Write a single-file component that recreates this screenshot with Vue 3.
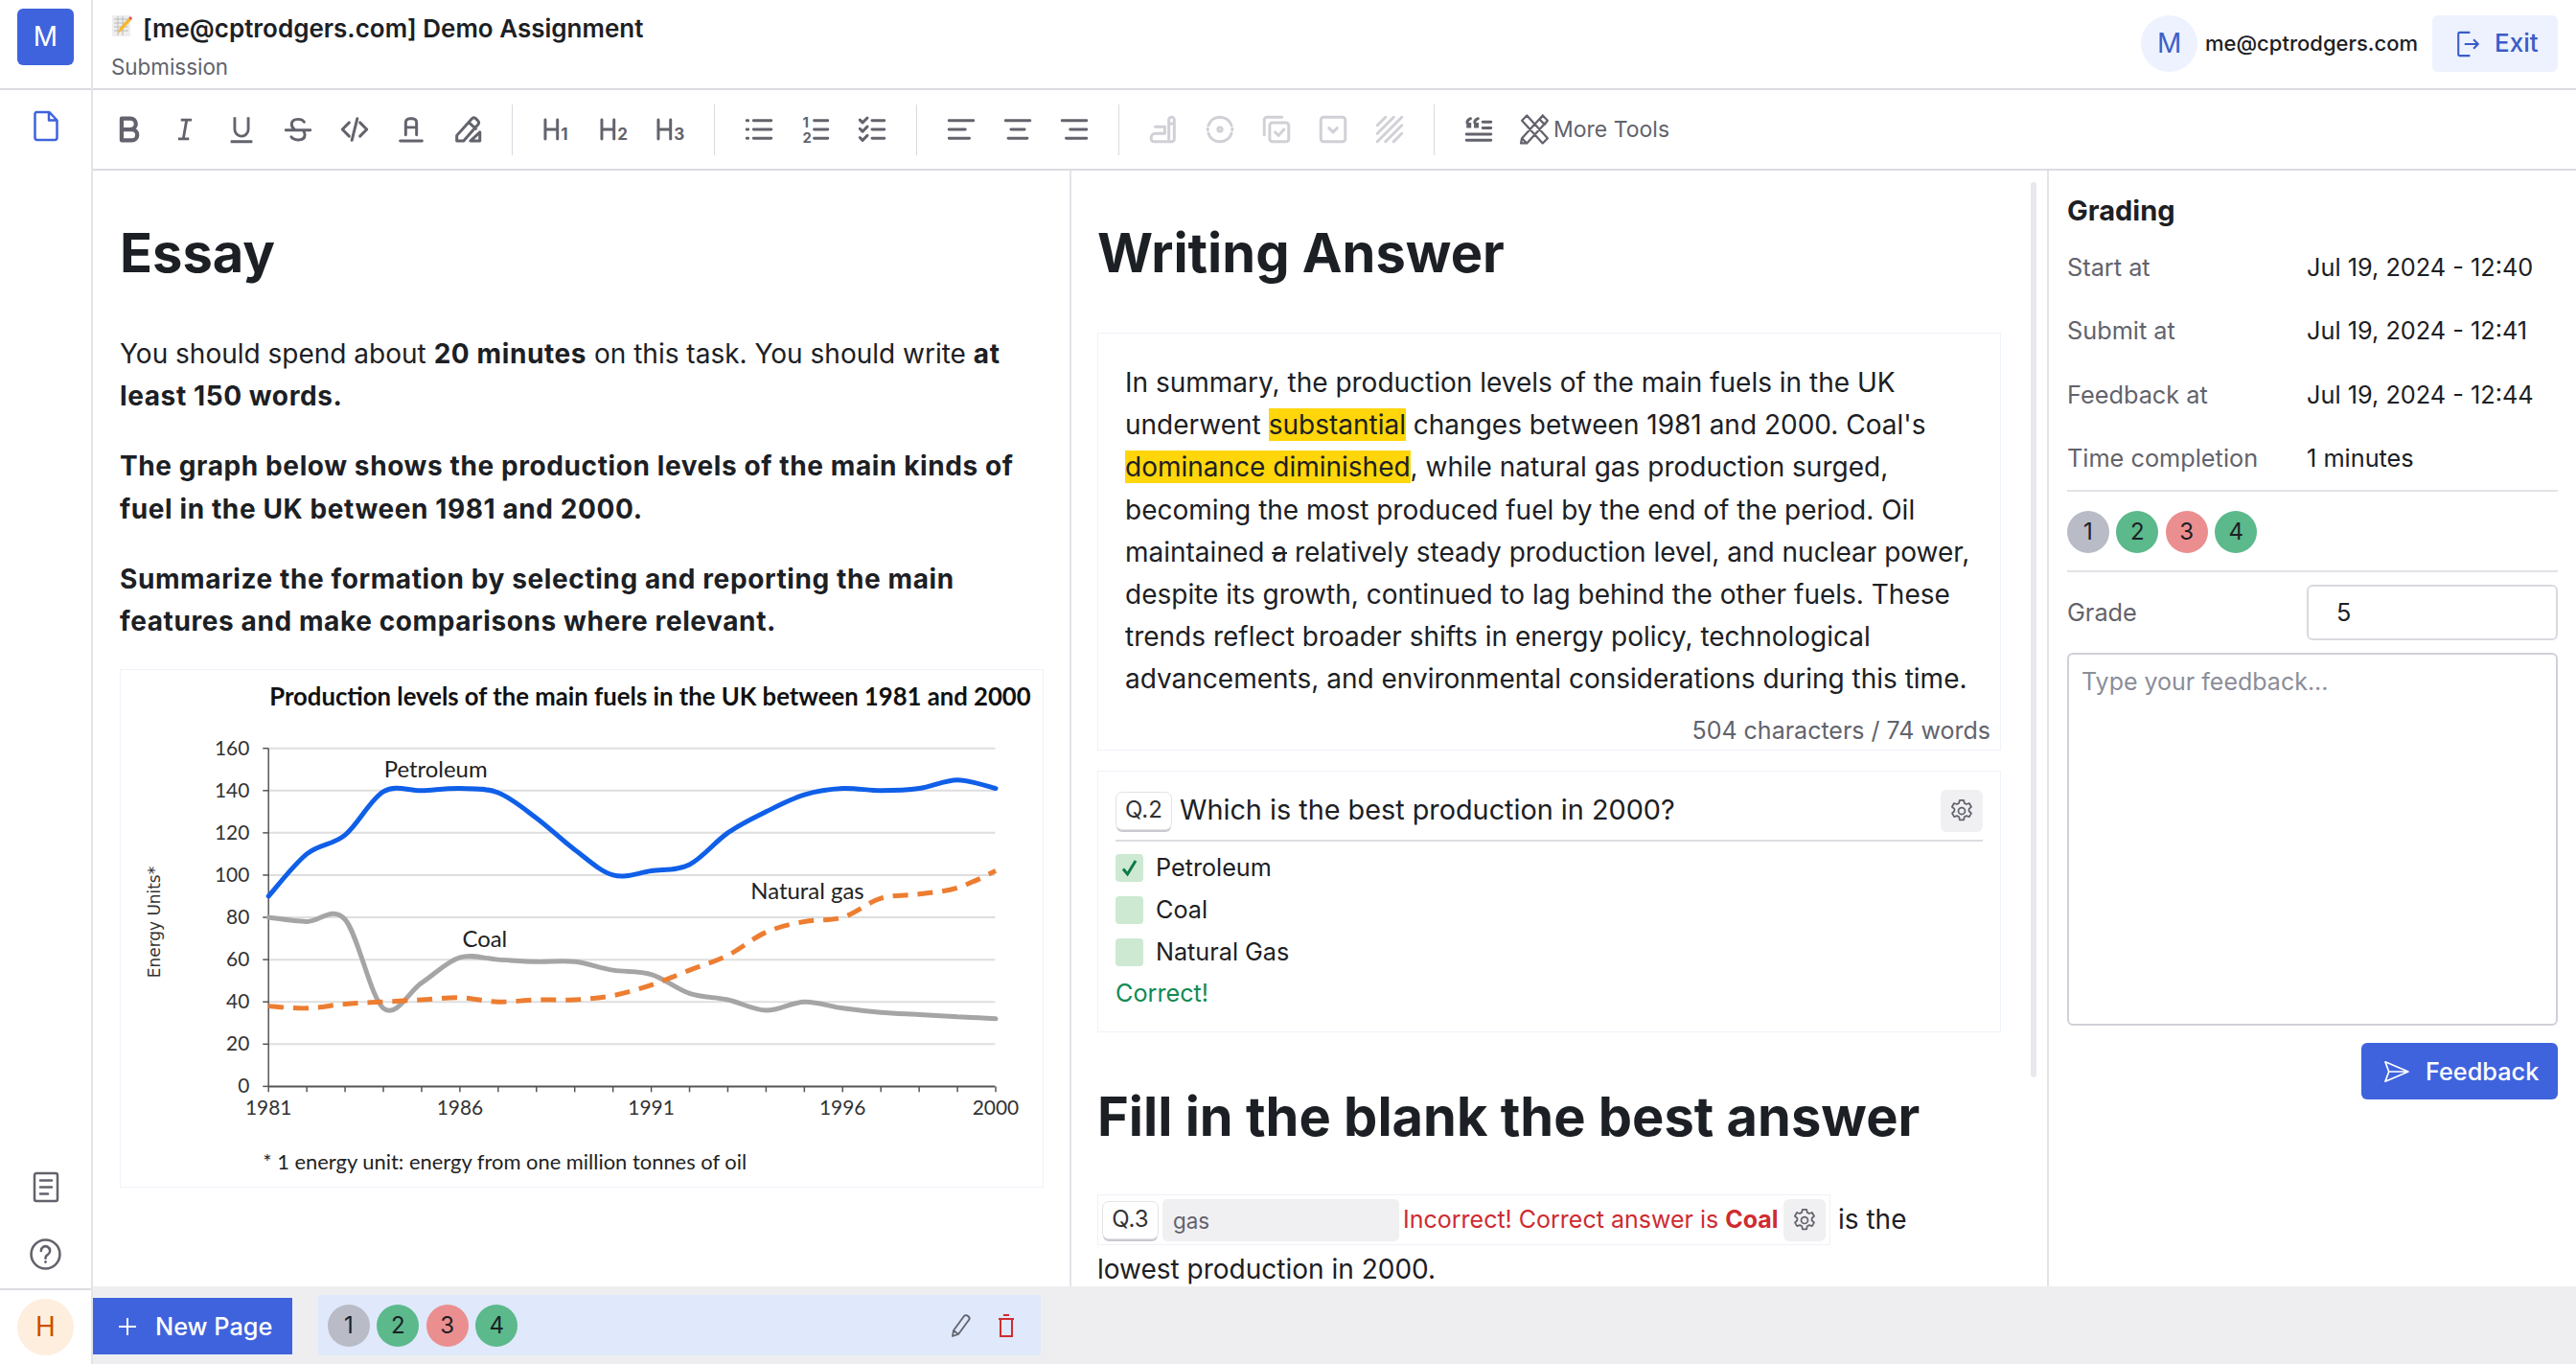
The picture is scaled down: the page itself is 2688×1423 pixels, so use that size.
<script setup>
const groups = [
  [
    { s: 'M7 4h6.500a4 4 0 0 1 0 8H7zM7 12h7.500a4 4 0 0 1 0 8H7z', w: 3 },
    { f: 'M15 20H7v-2h2.927l2.116-12H9V4h8v2h-2.927l-2.116 12H15z' },
    { f: 'M8 3v9a4 4 0 1 0 8 0V3h2v9a6 6 0 1 1-12 0V3h2zM4 20h16v2H4v-2z' },
    { s: 'M3 12.500h18M16.500 6.500C15.500 5 14 4.500 12 4.500c-2.800 0-4.700 1.400-4.700 3.800 0 1.700.9 3 2.500 4.200M7 17.500c1 1.500 2.700 2.200 5 2.200 3 0 5-1.400 5-3.900 0-1.200-.4-2.300-1.300-3.300' },
    { s: 'M8 7l-5 5 5 5M16 7l5 5-5 5M14 4l-4 16' },
    { s: 'M8 16V7a3 3 0 0 1 3-3h2a3 3 0 0 1 3 3v9M8 10.500h8M4 20.500h16' },
    { s: 'M4 20.500v-4L15 4.200c.8-.9 2-1 2.900-.2l1.600 1.500c.9.8 1 2 .1 2.900L9 20.500H4zM13 7l5 4.500M14 20.500l7-6.500v6.500h-7z' }
  ],
  [
    { s: 'M3.500 5v14M12.500 5v14M3.500 12h9', t: '1' },
    { s: 'M3.500 5v14M12.500 5v14M3.500 12h9', t: '2' },
    { s: 'M3.500 5v14M12.500 5v14M3.500 12h9', t: '3' }
  ],
  [
    { s: 'M8 5.500h13M8 12h13M8 18.500h13M3 5.500h1M3 12h1M3 18.500h1' },
    { s: 'M11 5.500h10M11 12h10M11 18.500h10', n: true },
    { s: 'M12 5.500h9M12 12h9M12 18.500h9M3 5l2 2 3.500-3.500M3 11.500l2 2 3.500-3.500M3 18l2 2 3.500-3.500' }
  ],
  [
    { s: 'M3 5.500h18M3 12h12M3 18.500h15' },
    { s: 'M3 5.500h18M7 12h10M5 18.500h14' },
    { s: 'M3 5.500h18M9 12h12M6 18.500h15' }
  ],
  [
    { off: true, s: 'M6 10h7v5H6a3 3 0 0 0-3 3v1a2 2 0 0 0 2 2h13a2 2 0 0 0 2-2V5a2 2 0 0 0-4 0v14M18 7.500v.5' },
    { off: true, s: 'M3.500 9a9 9 0 0 1 17 0M3.500 15a9 9 0 0 0 17 0M3 11.500v1M21 11.500v1M12 10.500a1.500 1.500 0 1 1 0 3 1.500 1.500 0 0 1 0-3z' },
    { off: true, s: 'M16 3H5a2 2 0 0 0-2 2v11M9 7h10a2 2 0 0 1 2 2v10a2 2 0 0 1-2 2H9a2 2 0 0 1-2-2V9a2 2 0 0 1 2-2zM11 14l2.500 2.500 4-4.500' },
    { off: true, s: 'M5 3h14a2 2 0 0 1 2 2v14a2 2 0 0 1-2 2H5a2 2 0 0 1-2-2V5a2 2 0 0 1 2-2zM9 11l3 3 3-3' },
    { off: true, s: 'M3 9l6-6M3 15L15 3M3 21L21 3M9 21L21 9M15 21l6-6' }
  ]
]

const dateRows = [
  ['Start at', 'Jul 19, 2024 - 12:40'],
  ['Submit at', 'Jul 19, 2024 - 12:41'],
  ['Feedback at', 'Jul 19, 2024 - 12:44'],
  ['Time completion', '1 minutes']
]
const dots = [
  { n: 1, c: 'd-grey' },
  { n: 2, c: 'd-green' },
  { n: 3, c: 'd-red' },
  { n: 4, c: 'd-green' }
]

/* chart */
const X0 = 279
const XSTEP = 40.085
const Y0 = 1135
const YU = 2.2125
const xOf = (i) => X0 + i * XSTEP
const yOf = (v) => Y0 - v * YU
function smooth(vals) {
  const p = vals.map((v, i) => [xOf(i), yOf(v)])
  let d = `M${p[0][0]} ${p[0][1]}`
  for (let i = 0; i < p.length - 1; i++) {
    const a = p[Math.max(i - 1, 0)]
    const b = p[i]
    const c = p[i + 1]
    const e = p[Math.min(i + 2, p.length - 1)]
    d += ` C${b[0] + (c[0] - a[0]) / 6} ${b[1] + (c[1] - a[1]) / 6} ${c[0] - (e[0] - b[0]) / 6} ${c[1] - (e[1] - b[1]) / 6} ${c[0]} ${c[1]}`
  }
  return d
}
const petroleum = smooth([90, 110, 119, 139.5, 140, 141, 139, 127, 112, 100, 102, 105, 120, 130, 138, 141, 140, 141, 145, 141])
const coal = smooth([80, 78, 79, 37, 49, 61, 60, 59, 59, 55, 53, 44, 41, 36, 40, 37, 35, 34, 33, 32])
const gas = smooth([38, 37, 39, 40, 41, 42, 40, 41, 41, 43, 48, 55, 62, 73, 78, 80, 89, 91, 94, 102])
const yTicks = [0, 20, 40, 60, 80, 100, 120, 140, 160]
const xTicks = Array.from({ length: 20 }, (_, i) => i)
const yearLabels = [
  [0, '1981'],
  [5, '1986'],
  [10, '1991'],
  [15, '1996'],
  [19, '2000']
]
</script>

<template>
  <div class="app">
    <aside class="side">
      <div class="side-top"><div class="logo">M</div></div>
      <div class="side-main">
        <svg class="side-icon blue" viewBox="0 0 28 32"><path d="M3.500 1.500h14l8 8.500v18a2.500 2.500 0 0 1-2.500 2.500H5A2.500 2.500 0 0 1 2.500 28V3zM17 2v8h8.500" /></svg>
        <div class="side-bottom">
          <svg class="side-icon grey" viewBox="0 0 28 32"><path d="M4 1.500h20a2 2 0 0 1 2 2v25a2 2 0 0 1-2 2H4a2 2 0 0 1-2-2v-25a2 2 0 0 1 2-2zM8 9h12M8 16h12M8 23h8" /></svg>
          <svg class="side-icon grey help" viewBox="0 0 32 32"><circle cx="16" cy="16" r="14.500" /><path d="M11.500 12.500a4.500 4.500 0 1 1 7 3.700c-1.600 1-2.500 2-2.500 3.800M16 23.500v.5" /></svg>
        </div>
      </div>
      <div class="side-foot"><div class="avatar-h">H</div></div>
    </aside>

    <div class="main">
      <header class="head">
        <div class="head-left">
          <div class="title"><span class="emoji"><svg viewBox="0 0 22 24"><rect x="1" y="1" width="19" height="22" fill="#eee" /><path d="M3 5h15M3 9h15M3 13h15M3 17h15M7 2v20M12 2v20" stroke="#bbb" stroke-width="1" /><path d="M7 20l2-6L18 4l3 2-10 11z" fill="#f5b82e" /><path d="M18 4l3 2 1-2-2-2z" fill="#e0574f" /></svg></span>[me@cptrodgers.com] Demo Assignment</div>
          <div class="sub">Submission</div>
        </div>
        <div class="head-right">
          <div class="avatar-m">M</div>
          <div class="email">me@cptrodgers.com</div>
          <div class="exit">
            <svg viewBox="0 0 26 30"><path d="M15 2H3.500A1.500 1.500 0 0 0 2 3.500v23A1.500 1.500 0 0 0 3.500 28H15M9 15h15M19 10l5 5-5 5" /></svg>
            <span>Exit</span>
          </div>
        </div>
      </header>

      <nav class="tools">
        <template v-for="(g, gi) in groups" :key="gi">
          <span v-if="gi" class="sep"></span>
          <button v-for="(ic, i) in g" :key="i" class="tool" :class="{ off: ic.off }">
            <svg viewBox="0 0 24 24">
              <path v-if="ic.f" :d="ic.f" class="fill" />
              <path v-if="ic.s" :d="ic.s" class="line" :class="{ heavy: ic.w }" />
              <text v-if="ic.t" x="15" y="20" class="digit">{{ ic.t }}</text>
              <template v-if="ic.n">
                <text x="2.500" y="10.500" class="digit small">1</text>
                <text x="2.500" y="22" class="digit small">2</text>
              </template>
            </svg>
          </button>
        </template>
        <span class="sep"></span>
        <button class="tool">
          <svg viewBox="0 0 24 24"><path class="fill" d="M3 7h3.500v4H3zM8.500 7H12v4H8.500z" /><path class="line" d="M3.500 7c0-1.500 1-2.500 2.500-3M9 7c0-1.500 1-2.500 2.500-3M15 6.500h6M15 11h6M3 15.500h18M3 20h18" /></svg>
        </button>
        <button class="more">
          <svg viewBox="0 0 32 32"><path d="M8 2l-5 5 21 23 5-5zM24 2l5 5L8 30l-5-5zM3 25l-1 5 6 0M24 2l-3 4 5 5 3-4z" /></svg>
          <span>More Tools</span>
        </button>
      </nav>

      <div class="body">
        <section class="col col-left">
          <h1>Essay</h1>
          <p>You should spend about <b>20 minutes</b> on this task. You should write <b>at least 150 words.</b></p>
          <p><b>The graph below shows the production levels of the main kinds of fuel in the UK between 1981 and 2000.</b></p>
          <p><b>Summarize the formation by selecting and reporting the main features and make comparisons where relevant.</b></p>
          <svg class="chart" viewBox="125 699 964 541">
            <text x="280" y="736" class="c-title">Production levels of the main fuels in the UK between 1981 and 2000</text>
            <line v-for="t in yTicks.slice(1)" :key="t" x1="279" x2="1040" :y1="yOf(t)" :y2="yOf(t)" class="grid" />
            <line x1="279" x2="279" y1="781" y2="1135" class="axis" />
            <line x1="279" x2="1040" y1="1135" y2="1135" class="axis thick" />
            <line v-for="t in yTicks" :key="'y' + t" x1="273" x2="279" :y1="yOf(t)" :y2="yOf(t)" class="axis" />
            <line v-for="i in xTicks" :key="'x' + i" :x1="xOf(i)" :x2="xOf(i)" y1="1135" y2="1141" class="axis" />
            <text v-for="t in yTicks" :key="'l' + t" x="259" :y="yOf(t) + 7" class="c-num" text-anchor="end">{{ t }}</text>
            <text v-for="l in yearLabels" :key="l[1]" :x="xOf(l[0])" y="1165" class="c-num" text-anchor="middle">{{ l[1] }}</text>
            <path :d="coal" class="c-coal" />
            <path :d="gas" class="c-gas" />
            <path :d="petroleum" class="c-pet" />
            <text x="400" y="811" class="c-lab">Petroleum</text>
            <text x="784" y="939" class="c-lab">Natural gas</text>
            <text x="482" y="989" class="c-lab">Coal</text>
            <text x="273" y="1222" class="c-note">* 1 energy  unit: energy from one million tonnes of oil</text>
            <text transform="translate(165 963) rotate(-90)" class="c-units" text-anchor="middle">Energy Units*</text>
          </svg>
        </section>

        <section class="col col-mid">
          <h1>Writing Answer</h1>
          <div class="answer">
            <div class="answer-text">In summary, the production levels of the main fuels in the UK underwent <mark>substantial</mark> changes between 1981 and 2000. Coal's <mark>dominance diminished</mark>, while natural gas production surged, becoming the most produced fuel by the end of the period. Oil maintained <s>a</s> relatively steady production level, and nuclear power, despite its growth, continued to lag behind the other fuels. These trends reflect broader shifts in energy policy, technological advancements, and environmental considerations during this time.</div>
            <div class="count">504 characters / 74 words</div>
          </div>
          <div class="quiz">
            <div class="q-head">
              <span class="badge">Q.2</span>
              <span class="q-text">Which is the best production in 2000?</span>
              <span class="gear-btn"><svg viewBox="0 0 24 24"><path d="M10.300 3h3.400l.5 2.500 1.700.9 2.400-.8 1.700 3-1.900 1.700v1.900l1.900 1.700-1.700 3-2.400-.8-1.700.9-.5 2.500h-3.400l-.5-2.500-1.700-.9-2.400.8-1.700-3 1.900-1.700v-1.900L3.900 8.600l1.700-3 2.400.8 1.700-.9z" /><circle cx="12" cy="12" r="2.800" /></svg></span>
            </div>
            <label class="opt"><span class="cb"><svg viewBox="0 0 29 29"><path d="M8 15.500l4.500 5.500L21 7" /></svg></span>Petroleum</label>
            <label class="opt"><span class="cb"></span>Coal</label>
            <label class="opt"><span class="cb"></span>Natural Gas</label>
            <div class="correct">Correct!</div>
          </div>
          <h1 class="h-fill">Fill in the blank the best answer</h1>
          <div class="blank">
            <span class="blank-box">
              <span class="badge">Q.3</span>
              <span class="blank-input">gas</span>
              <span class="wrong">Incorrect! Correct answer is <b>Coal</b></span>
              <span class="gear-btn"><svg viewBox="0 0 24 24"><path d="M10.300 3h3.400l.5 2.500 1.700.9 2.400-.8 1.700 3-1.900 1.700v1.900l1.900 1.700-1.700 3-2.400-.8-1.700.9-.5 2.500h-3.400l-.5-2.500-1.700-.9-2.400.8-1.700-3 1.900-1.700v-1.900L3.900 8.600l1.700-3 2.400.8 1.700-.9z" /><circle cx="12" cy="12" r="2.800" /></svg></span>
            </span>
            <span class="after">is the</span>
          </div>
          <p class="last">lowest production in 2000.</p>
          <div class="scrollbar"></div>
        </section>

        <aside class="col-right">
          <h2>Grading</h2>
          <div v-for="r in dateRows" :key="r[0]" class="info"><span class="k">{{ r[0] }}</span><span>{{ r[1] }}</span></div>
          <div class="dots-row">
            <span v-for="d in dots" :key="d.n" class="dot" :class="d.c">{{ d.n }}</span>
          </div>
          <div class="grade"><span class="k">Grade</span><div class="grade-input">5</div></div>
          <div class="feedback-box">Type your feedback...</div>
          <div class="fb-row">
            <button class="fb-btn">
              <svg viewBox="0 0 30 26"><path d="M2 2l26 11L2 24l4-11zM6 13h22" /></svg>
              <span>Feedback</span>
            </button>
          </div>
        </aside>
      </div>

      <footer class="foot">
        <button class="new-page">
          <svg viewBox="0 0 20 20"><path d="M10 1v18M1 10h18" /></svg>
          <span>New Page</span>
        </button>
        <div class="page-row">
          <span v-for="d in dots" :key="d.n" class="dot" :class="d.c">{{ d.n }}</span>
          <svg class="pencil" viewBox="0 0 22 26"><path d="M2 24l1-6L14 3c1-1 3-1 4 0l1 1c1 1 1 2 0 3L8 22z M3 18l5 4" /></svg>
          <svg class="trash" viewBox="0 0 18 26"><path d="M1 6h16M6 2h6M3 6v18h12V6" /></svg>
        </div>
      </footer>
    </div>
  </div>
</template>

<style>
html, body { margin: 0; background: #fff; overflow: hidden; }
</style>

<style scoped>
* { box-sizing: border-box; }
.app {
  display: flex;
  width: 2688px;
  height: 1423px;
  overflow: hidden;
  font-family: Inter, "Liberation Sans", sans-serif;
  font-size: 28px;
  line-height: 44.200px;
  color: #1c2024;
  background: #fff;
}
.side {
  width: 97px;
  flex: none;
  display: flex;
  flex-direction: column;
  border-right: 2px solid #e3e3e8;
}
.side-top {
  height: 94px;
  flex: none;
  padding: 9px 0 0 18px;
  border-bottom: 2px solid #dcdce1;
}
.logo {
  width: 59px;
  height: 59px;
  border-radius: 6px;
  background: #3f63dd;
  color: #fff;
  display: flex;
  align-items: center;
  justify-content: center;
  font-size: 28px;
}
.side-main {
  flex: 1;
  display: flex;
  flex-direction: column;
  align-items: center;
  padding-top: 21px;
  justify-content: space-between;
}
.side-icon {
  width: 28px;
  height: 33px;
  fill: none;
  stroke-width: 2.500;
  stroke-linejoin: round;
  stroke-linecap: round;
  display: block;
}
.side-icon.blue { stroke: #3f63dd; }
.side-icon.grey { stroke: #62636c; }
.side-icon.help { width: 33px; }
.side-bottom {
  display: flex;
  flex-direction: column;
  align-items: center;
  gap: 37px;
  padding-bottom: 19px;
}
.side-foot {
  height: 79px;
  flex: none;
  padding: 9px 0 0 18px;
  border-top: 2px solid #dcdce1;
}
.avatar-h {
  width: 59px;
  height: 59px;
  border-radius: 50%;
  background: #feeedd;
  color: #cc4e00;
  display: flex;
  align-items: center;
  justify-content: center;
  font-size: 28px;
}

.main {
  flex: 1;
  min-width: 0;
  display: flex;
  flex-direction: column;
}
.head {
  height: 94px;
  flex: none;
  display: flex;
  justify-content: space-between;
  align-items: flex-start;
  padding: 0 19px 0 19px;
  border-bottom: 2px solid #dcdce1;
}
.title {
  display: flex;
  align-items: center;
  margin-top: 8px;
  font-size: 26px;
  line-height: 44px;
  font-weight: 600;
  color: #1c2024;
}
.emoji {
  width: 22px;
  height: 24px;
  margin-right: 11px;
  margin-top: -6px;
  display: block;
}
.emoji svg { display: block; width: 22px; height: 24px; }
.sub {
  font-size: 22.400px;
  line-height: 35px;
  color: #62636c;
}
.head-right {
  display: flex;
  align-items: center;
  padding-top: 16px;
}
.avatar-m {
  width: 59px;
  height: 59px;
  border-radius: 50%;
  background: #edf2fe;
  color: #3f5fc8;
  display: flex;
  align-items: center;
  justify-content: center;
  font-size: 28px;
}
.email {
  margin: 0 15px 0 8px;
  font-size: 22px;
  color: #1c2024;
  font-weight: 500;
}
.exit {
  width: 131px;
  height: 59px;
  border-radius: 6px;
  background: #edf2fe;
  color: #3a5bc7;
  display: flex;
  align-items: center;
  gap: 15px;
  padding-left: 25px;
  font-size: 26px;
  font-weight: 500;
}
.exit svg {
  width: 25px;
  height: 28px;
  fill: none;
  stroke: #3a5bc7;
  stroke-width: 2.200;
}

.tools {
  height: 84px;
  flex: none;
  display: flex;
  align-items: center;
  padding-left: 7px;
  border-bottom: 2px solid #dcdce1;
}
.tool {
  width: 59px;
  height: 59px;
  flex: none;
  border: 0;
  padding: 0;
  background: none;
  display: flex;
  align-items: center;
  justify-content: center;
  color: #62636c;
}
.tool svg { width: 34px; height: 34px; overflow: visible; }
.tool .fill { fill: currentColor; stroke: none; }
.tool .line {
  fill: none;
  stroke: currentColor;
  stroke-width: 2.100;
  stroke-linecap: round;
  stroke-linejoin: round;
}
.tool .line.heavy { stroke-width: 3; }
.tool.off { color: #d0d0d7; }
.digit {
  font-family: Inter, sans-serif;
  font-size: 12px;
  font-weight: 700;
  fill: currentColor;
}
.digit.small { font-size: 10.500px; }
.sep {
  width: 1px;
  height: 53px;
  flex: none;
  margin: 0 16.500px;
  background: #d9d9e0;
}
.more {
  border: 0;
  background: none;
  padding: 0;
  margin-left: 13px;
  display: flex;
  align-items: center;
  font-family: inherit;
  font-size: 23px;
  color: #62636c;
}
.more svg {
  width: 33px;
  height: 34px;
  margin-right: 3px;
  fill: none;
  stroke: #62636c;
  stroke-width: 2.200;
  stroke-linejoin: round;
}

.body {
  flex: 1;
  min-height: 0;
  display: flex;
}
.col {
  height: 100%;
  overflow: hidden;
  position: relative;
}
h1 {
  margin: 0;
  font-size: 56px;
  line-height: 70px;
  font-weight: 700;
  color: #1c2024;
}
p { margin: 0 0 29px; }
p b { letter-spacing: 0.600px; }
.col-left {
  width: 1021px;
  flex: none;
  padding: 51px 27px 0 28px;
  border-right: 2px solid #e3e3e8;
}
.col-left h1 { margin-bottom: 48px; }
.chart {
  display: block;
  width: 964px;
  height: 541px;
  margin-top: -1px;
  border: 1px solid #eef2fa;
}
.c-title { font-family: Lato, sans-serif; font-weight: 700; font-size: 25.800px; fill: #111; }
.c-num { font-family: Lato, sans-serif; font-size: 21px; fill: #333; }
.c-lab { font-family: Lato, sans-serif; font-size: 24px; fill: #222; }
.c-note { font-family: Lato, sans-serif; font-size: 22px; fill: #222; white-space: pre; }
.c-units { font-family: "DejaVu Sans", sans-serif; font-size: 17px; fill: #333; }
.grid { stroke: #dedede; stroke-width: 2; }
.axis { stroke: #555; stroke-width: 1.500; }
.axis.thick { stroke-width: 2; }
.c-pet { fill: none; stroke: #0f5fe8; stroke-width: 5; stroke-linecap: round; }
.c-coal { fill: none; stroke: #a5a5a5; stroke-width: 5; stroke-linecap: round; }
.c-gas { fill: none; stroke: #ed7d31; stroke-width: 5; stroke-dasharray: 16 10; }

.col-mid {
  flex: 1;
  min-width: 0;
  padding: 51px 0 0 27px;
  border-right: 2px solid #e3e3e8;
}
.scrollbar {
  position: absolute;
  right: 11px;
  top: 12px;
  width: 6px;
  height: 934px;
  border-radius: 3px;
  background: #e8e8ed;
}
.answer {
  width: 943px;
  height: 436px;
  margin-top: 48px;
  padding: 29px 10px 0 28px;
  border: 1px solid #eef2fa;
}
.answer-text { width: 900px; }
mark { background: #ffd60a; color: inherit; }
.count {
  text-align: right;
  color: #62636c;
  font-size: 25px;
  margin-top: 9px;
}
.quiz {
  width: 943px;
  height: 273px;
  margin-top: 21px;
  padding: 19px 18px 0 18px;
  border: 1px solid #eef2fa;
}
.q-head {
  display: flex;
  align-items: center;
  height: 54px;
  margin-bottom: 5px;
  border-bottom: 2px solid #dcdce1;
  padding-bottom: 9px;
}
.badge {
  flex: none;
  width: 59px;
  height: 40px;
  border-radius: 7px;
  display: flex;
  align-items: center;
  justify-content: center;
  font-size: 24px;
  background: #fff;
  border: 1px solid #e3e3e8;
  box-shadow: 0 3px 0 -1px #c9c9d1;
  color: #333;
}
.q-text { margin-left: 8px; flex: 1; font-size: 28.800px; }
.gear-btn {
  flex: none;
  width: 44px;
  height: 44px;
  border-radius: 6px;
  background: #f0f0f3;
  display: flex;
  align-items: center;
  justify-content: center;
}
.gear-btn svg {
  width: 30px;
  height: 30px;
  fill: none;
  stroke: #62636c;
  stroke-width: 1.400;
  stroke-linejoin: round;
}
.opt {
  display: flex;
  align-items: center;
  height: 44px;
  font-size: 25.200px;
  color: #1c2024;
}
.cb {
  width: 29px;
  height: 29px;
  border-radius: 4px;
  background: #cde9d2;
  margin-right: 13px;
  display: block;
}
.cb svg {
  display: block;
  fill: none;
  stroke: #0f7a48;
  stroke-width: 3;
}
.correct { color: #118a55; margin-top: -1px; font-size: 25.200px; }
.h-fill { margin-top: 53px; }
.blank {
  display: flex;
  align-items: center;
  margin-top: 46px;
  height: 53px;
}
.blank-box {
  display: flex;
  align-items: center;
  gap: 4px;
  width: 765px;
  height: 53px;
  padding: 0 4px;
  border: 1px solid #eef2fa;
}
.blank-input {
  flex: none;
  width: 247px;
  height: 44px;
  border-radius: 5px;
  background: #f0f0f3;
  color: #62636c;
  padding-left: 11px;
  font-size: 22.400px;
  line-height: 46px;
}
.wrong { color: #ce2c31; font-size: 25px; white-space: nowrap; flex: 1; }
.after { margin-left: 8px; }
.last { margin: 3px 0 0; }

.col-right {
  flex: none;
  width: 550px;
  padding: 20px 19px 0 19px;
}
h2 {
  margin: 0;
  font-size: 29px;
  font-weight: 700;
  line-height: 44px;
  margin-bottom: 4px;
}
.info {
  display: flex;
  height: 66.300px;
  align-items: center;
  font-size: 25.300px;
}
.k {
  width: 250px;
  flex: none;
  color: #62636c;
  font-size: 25.300px;
}
.dots-row {
  display: flex;
  gap: 7.400px;
  margin-top: 0;
  padding: 20px 0 18px;
  border-top: 2px solid #e3e3e8;
  border-bottom: 2px solid #e3e3e8;
}
.dot {
  width: 44px;
  height: 44px;
  border-radius: 50%;
  flex: none;
  display: flex;
  align-items: center;
  justify-content: center;
  font-size: 24px;
  line-height: 44px;
  color: #1c2024;
}
.d-grey { background: #b9bbc6; }
.d-green { background: #5bb98b; }
.d-red { background: #eb8e90; }
.grade {
  display: flex;
  align-items: center;
  margin-top: 13px;
}
.grade-input {
  flex: 1;
  height: 58px;
  border: 2px solid #d9d9e0;
  border-radius: 6px;
  padding-left: 29px;
  line-height: 54px;
  font-size: 25.300px;
}
.feedback-box {
  margin-top: 13px;
  height: 389px;
  border: 2px solid #d0d0d8;
  border-radius: 6px;
  padding: 6px 13px;
  color: #8b8d98;
  font-size: 25px;
}
.fb-row {
  display: flex;
  justify-content: flex-end;
  margin-top: 18px;
}
.fb-btn {
  width: 205px;
  height: 59px;
  border: 0;
  border-radius: 6px;
  background: #3f63dd;
  color: #fff;
  display: flex;
  align-items: center;
  gap: 16px;
  padding-left: 23px;
  font-family: inherit;
  font-size: 25.300px;
  font-weight: 500;
}
.fb-btn svg {
  width: 28px;
  height: 24px;
  fill: none;
  stroke: #fff;
  stroke-width: 1.800;
  stroke-linejoin: round;
}

.foot {
  height: 81px;
  flex: none;
  display: flex;
  align-items: flex-start;
  background: #eeeef1;
  gap: 27px;
}
.new-page {
  width: 208px;
  height: 59px;
  margin-top: 12px;
  border: 0;
  background: #3f63dd;
  color: #fff;
  display: flex;
  align-items: center;
  gap: 19px;
  padding-left: 26px;
  font-family: inherit;
  font-size: 25.300px;
  font-weight: 500;
}
.new-page svg {
  width: 20px;
  height: 20px;
  stroke: #fff;
  stroke-width: 2;
  fill: none;
}
.page-row {
  width: 754px;
  height: 63px;
  margin-top: 9px;
  background: #e0e8fb;
  display: flex;
  align-items: center;
  gap: 7.400px;
  padding: 0 27px 0 10px;
}
.pencil {
  width: 22px;
  height: 26px;
  margin-left: auto;
  margin-right: 20px;
  fill: none;
  stroke: #62636c;
  stroke-width: 1.800;
  stroke-linejoin: round;
}
.trash {
  width: 18px;
  height: 26px;
  fill: none;
  stroke: #ce2c31;
  stroke-width: 2;
}
</style>
